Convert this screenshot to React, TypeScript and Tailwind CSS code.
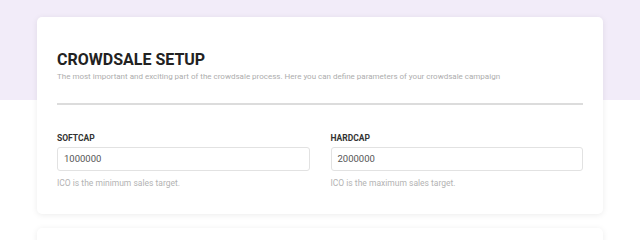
import React from "react";

function Field({ label, value, help }: { label: string; value: string; help: string }) {
  return (
    <div className="flex flex-col">
      <div className="text-[8.5px] leading-[12px] font-bold text-[#333]">{label}</div>
      <div className="mt-[3px] h-[24px] rounded-[3px] border border-[#e2e2e2] bg-white flex items-center pl-[6px] text-[9.5px] text-[#555]">
        {value}
      </div>
      <div className="mt-[6px] text-[8.5px] leading-[12px] text-[#b3b3b3]">{help}</div>
    </div>
  );
}

export default function App() {
  return (
    <div className="relative w-[640px] h-[240px] overflow-hidden bg-white" style={{ fontFamily: "Roboto, 'Noto Sans', sans-serif" }}>
      <div className="absolute left-0 top-0 w-full h-[100px] bg-[#f2ecf9]" />
      <div className="relative pt-[17px] px-[37px] flex flex-col gap-[14px]">
        <div className="bg-white rounded-[5px] shadow-[0_1px_6px_rgba(0,0,0,0.08)] px-[20px] pt-[33px] pb-[25px]">
          <div className="text-[16px] leading-[20px] font-bold text-[#222]">CROWDSALE SETUP</div>
          <div className="text-[8px] leading-[13px] text-[#adadad]">
            The most important and exciting part of the crowdsale process. Here you can define parameters of your crowdsale campaign
          </div>
          <div className="mt-[20px] h-[2px] bg-[#dcdcdc]" />
          <div className="mt-[27px] grid grid-cols-2 gap-x-[21px]">
            <Field label="SOFTCAP" value="1000000" help="ICO is the minimum sales target." />
            <Field label="HARDCAP" value="2000000" help="ICO is the maximum sales target." />
          </div>
        </div>
        <div className="bg-white rounded-[5px] shadow-[0_1px_6px_rgba(0,0,0,0.08)] h-[60px]" />
      </div>
    </div>
  );
}
